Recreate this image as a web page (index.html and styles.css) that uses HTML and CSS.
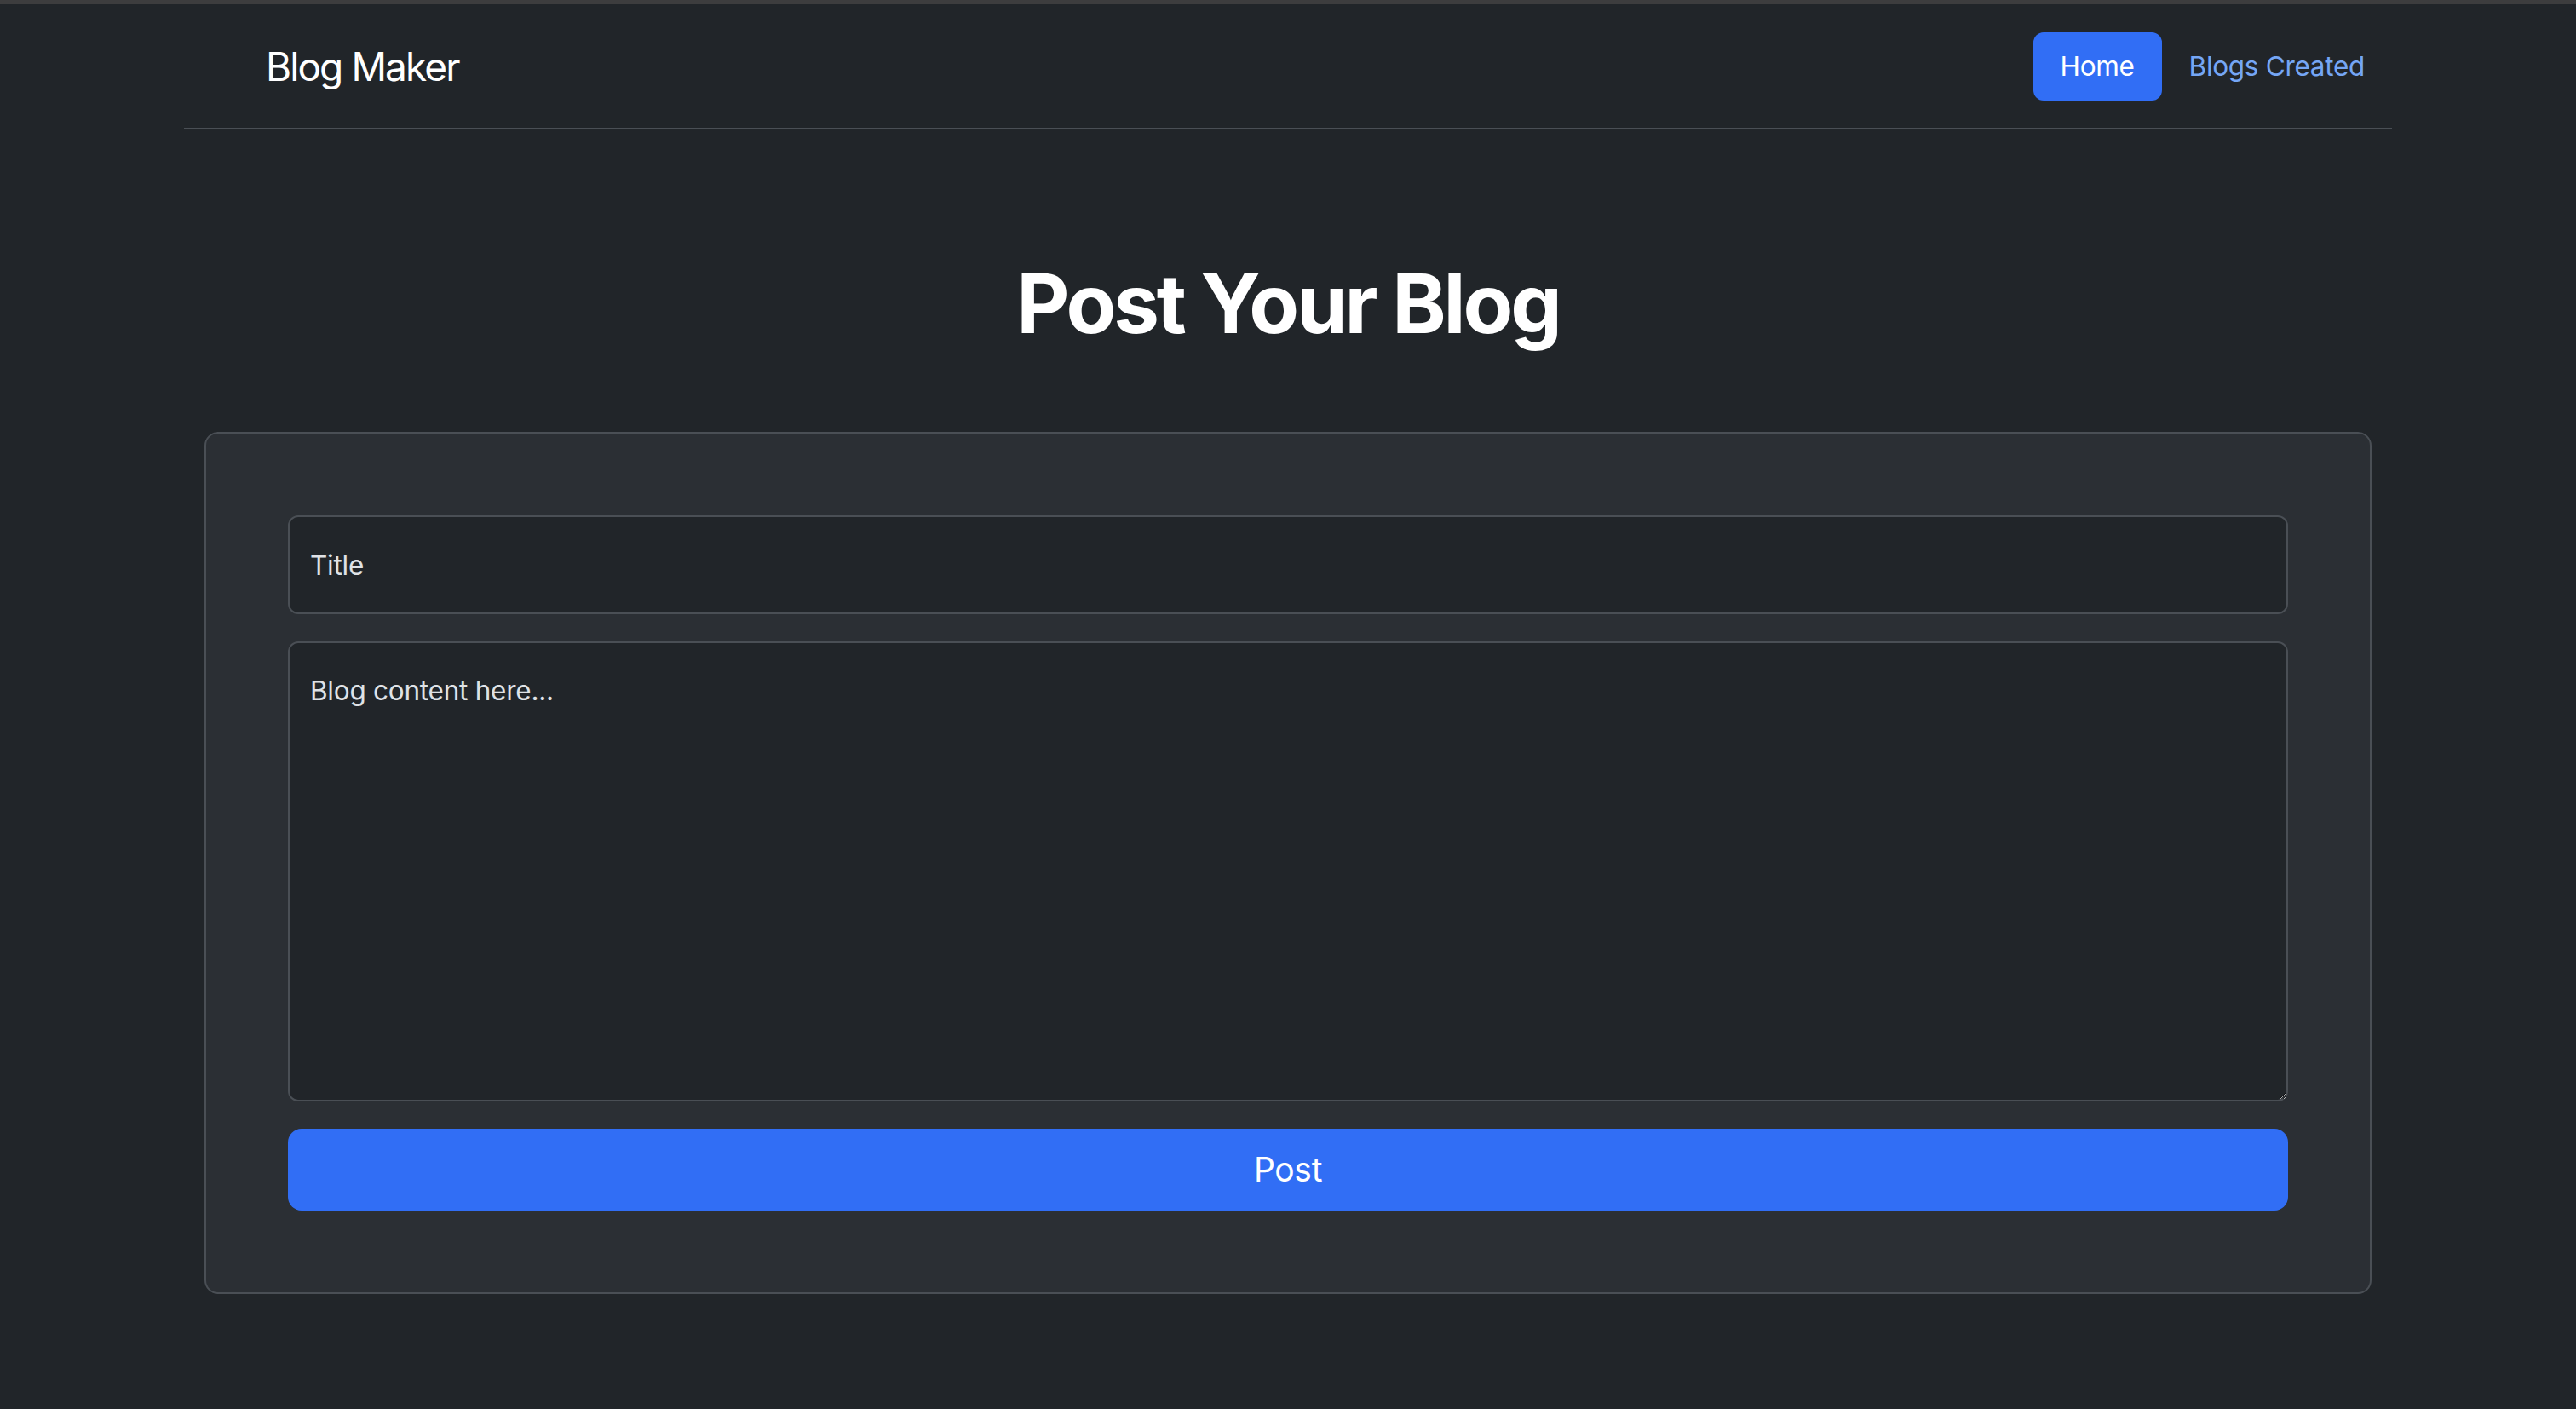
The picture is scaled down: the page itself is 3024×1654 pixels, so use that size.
FILE: index.html
```html
<!DOCTYPE html>
<html lang="en">
<head>
<meta charset="utf-8">
<title>Blog Maker</title>
<link rel="stylesheet" href="styles.css">
</head>
<body>
<div class="chrome-strip"></div>
<div class="container">
  <header class="site-header">
    <a class="brand" href="#"><span class="brand-icon"></span><span class="brand-name">Blog Maker</span></a>
    <ul class="nav">
      <li><a class="nav-link active" href="#">Home</a></li>
      <li><a class="nav-link" href="#">Blogs Created</a></li>
    </ul>
  </header>
  <section class="hero">
    <h1 class="hero-title">Post Your Blog</h1>
  </section>
  <div class="inner">
    <form class="post-card">
      <input class="field" type="text" placeholder="Title">
      <textarea class="field field-area" placeholder="Blog content here..."></textarea>
      <button class="btn-post" type="button">Post</button>
    </form>
  </div>
</div>
</body>
</html>
```
FILE: styles.css
```css
* { box-sizing: border-box; }
html, body {
  margin: 0;
  padding: 0;
  background: #212529;
  color: #dee2e6;
  font-family: Inter, "Noto Sans", "Liberation Sans", sans-serif;
}
.chrome-strip {
  height: 5px;
  margin-bottom: 1px;
  background: #3d3d3e;
}
.container {
  width: 2640px;
  margin: 0 auto;
  padding: 0 24px;
}
.site-header {
  display: flex;
  align-items: center;
  justify-content: space-between;
  padding: 32px 0;
  border-bottom: 2px solid #4a4f55;
}
.brand {
  display: flex;
  align-items: center;
  color: #ffffff;
  text-decoration: none;
}
.brand-icon {
  display: block;
  width: 80px;
  height: 64px;
  margin-right: 16px;
}
.brand-name {
  font-size: 46px;
  line-height: 58px;
  letter-spacing: -1.9px;
}
.nav {
  display: flex;
  list-style: none;
  margin: 0;
  padding: 0;
}
.nav-link {
  display: block;
  padding: 16px 32px;
  font-size: 31.5px;
  line-height: 48px;
  color: #75a6f5;
  text-decoration: none;
  border-radius: 12px;
  letter-spacing: -0.3px;
}
.nav-link.active {
  background: #316ef5;
  color: #ffffff;
}
.hero {
  padding-top: 147px;
  text-align: center;
}
.hero-title {
  margin: 0 0 93px;
  font-size: 96px;
  line-height: 115px;
  font-weight: 700;
  color: #ffffff;
  letter-spacing: -3.1px;
}
.inner {
  padding: 0 24px;
}
.post-card {
  display: flex;
  flex-direction: column;
  gap: 32px;
  padding: 96px;
  background: #2b2f34;
  border: 2px solid #4a4f55;
  border-radius: 16px;
}
.field {
  display: block;
  width: 100%;
  height: 116px;
  padding: 0 24px;
  font-family: inherit;
  font-size: 31.5px;
  line-height: 48px;
  color: #dee2e6;
  background: #212529;
  border: 2px solid #4a4f55;
  border-radius: 12px;
  outline: none;
  letter-spacing: -0.25px;
}
.field::placeholder {
  color: #dfe2e6;
  opacity: 1;
}
.field-area {
  height: 540px;
  padding: 32px 24px;
  resize: vertical;
}
.btn-post {
  display: block;
  width: 100%;
  height: 96px;
  font-family: inherit;
  font-size: 39px;
  line-height: 60px;
  color: #ffffff;
  background: #316ef5;
  border: none;
  border-radius: 16px;
  letter-spacing: -0.3px;
}
```
